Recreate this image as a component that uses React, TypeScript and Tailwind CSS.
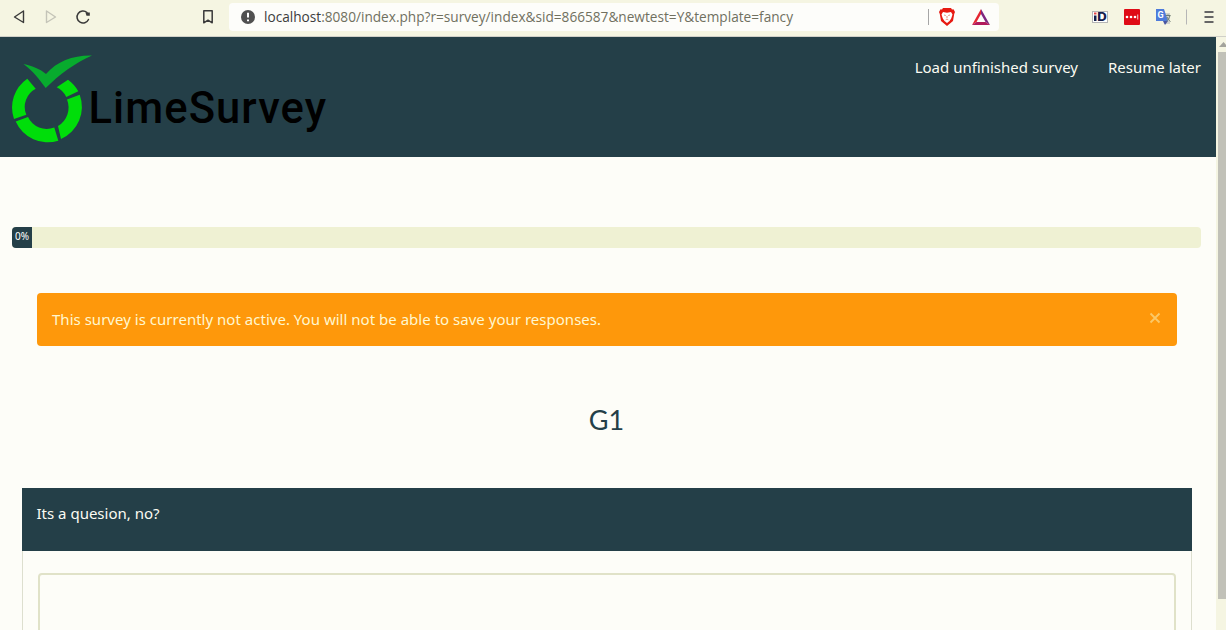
import React from "react";

function LimeLogo() {
  return (
    <svg className="block" width="320" height="100" viewBox="0 0 320 100" aria-label="LimeSurvey">
      <g transform="translate(-10 -50)">
        <path d="M23.500 64C33 66 40 69 46 74C57 61 74 55 92 55.500C75 63 60 74 45.700 88C39 79 33 71 23.500 64Z" fill="#08ab2e" />
        <g fill="#00de0a">
          <path d="M27.300 78.700A35 35 0 0 0 14 119L26.300 114.700A20.500 20.500 0 0 1 35.700 88.700Z" />
          <path d="M15.700 121.500A35 35 0 0 0 58.300 140.700L54.300 127.500A20.500 20.500 0 0 1 28 117Z" />
          <path d="M61 139A35 35 0 0 0 79.700 94.700L67 99.500A21.500 21.500 0 0 1 58 126Z" />
          <path d="M56.700 87.300L68 79.700A35 35 0 0 1 78.300 91.300L66.300 97A21 21 0 0 0 56.700 87.300Z" />
        </g>
        <text x="88.500" y="122.500" fill="#000" fontFamily="Roboto, sans-serif" fontWeight="500" fontSize="43.500" textLength="237.500">LimeSurvey</text>
      </g>
    </svg>
  );
}

function Toolbar() {
  return (
    <div className="flex h-[37px] shrink-0 items-start border-b border-[#d0d0c8] bg-[#f5f5e2] font-['Open_Sans',sans-serif]">
      <svg className="h-[34px] w-[229px] shrink-0" viewBox="0 0 229 34" fill="none" strokeLinejoin="round" strokeLinecap="round">
        <path d="M23.500 11v11.500L14.500 17z" stroke="#3a3a3a" strokeWidth="1.400" />
        <path d="M46.500 11v11.500L55.500 17z" stroke="#c4c4b8" strokeWidth="1.400" />
        <path d="M88.500 19.500a6 6 0 1 1-1.500-7" stroke="#3a3a3a" strokeWidth="1.500" />
        <path d="M85.500 12.500h4.300v3.300h-3.300z" fill="#3a3a3a" />
        <path d="M203.800 10.800h8.400v12L208 20.200l-4.200 2.600z" stroke="#3a3a3a" strokeWidth="1.500" />
      </svg>
      <div className="mt-[3px] flex h-7 w-[770px] shrink-0 items-center rounded bg-[#fdfdfa]">
        <svg className="ml-3 size-[14px] shrink-0" viewBox="0 0 14 14">
          <circle cx="7" cy="7" r="7" fill="#505050" />
          <path d="M7 2.800v4.800M7 9.500v1.800" stroke="#fff" strokeWidth="2" />
        </svg>
        <svg className="ml-[9px] h-7 w-[664px] shrink-0" viewBox="0 0 664 28">
          <text x="0" y="19" fontSize="14" textLength="529" lengthAdjust="spacingAndGlyphs" fill="#70705f">
            <tspan fill="#3c3c3c">localhost</tspan>:8080/index.php?r=survey/index&amp;sid=866587&amp;newtest=Y&amp;template=fancy
          </text>
        </svg>
        <div className="h-4 w-px bg-[#a6a6a6]" />
        <svg className="ml-[10px] h-[18px] w-4" viewBox="0 0 16 18">
          <path d="M4 0h8l1 1.500 1.500-.2L16 4l-.8 2L14 13l-6 5-6-5L.8 6 0 4l1.500-2.700 1.500.2z" fill="#e71a12" />
          <path d="M4 4l4 .7L12 4l1.500 2.500-1.300 4-1.700 2.500L8 15l-2.500-2-1.700-2.500-1.300-4z" fill="#fff" />
          <path d="M5 7l1.800.5M11 7l-1.800.5M8 8v2M6.700 11.800L8 11l1.300.8" stroke="#e88070" strokeWidth="0.900" fill="none" />
        </svg>
        <svg className="ml-[17px] h-4 w-[18px]" viewBox="0 0 18 16">
          <path d="M9 0L0 16l4.500-3L9 5z" fill="#e52631" />
          <path d="M9 0l9 16-4.500-3L9 5z" fill="#7e2680" />
          <path d="M0 16h18l-4.500-3h-9z" fill="#b11a5c" />
        </svg>
      </div>
      <svg className="h-[34px] w-[227px] shrink-0" viewBox="0 0 227 34">
        <rect x="93.500" y="11.500" width="15" height="11" fill="#fff" stroke="#b5b5b5" />
        <path d="M95 15.500h2.500V21H95z" fill="#15204c" />
        <rect x="95" y="12.500" width="2.500" height="2" fill="#e34646" />
        <text x="98.300" y="21" fontFamily="Inter, sans-serif" fontSize="11.500" fontWeight="800" fill="#15204c" textLength="9.500" lengthAdjust="spacingAndGlyphs">D</text>
        <rect x="125" y="9" width="16" height="16" rx="1" fill="#df0b16" />
        <g fill="#fff"><circle cx="128" cy="17" r="1.300" /><circle cx="132" cy="17" r="1.300" /><circle cx="136" cy="17" r="1.300" /><path d="M138.400 14.500h.8v5h-.8z" /></g>
        <path d="M163 13h8v11h-6z" fill="#d0d2cc" />
        <path d="M157 9h8l4 12h-12z" fill="#4e7bdb" />
        <path d="M164 21h5l-3 4z" fill="#4855a2" />
        <text x="158.500" y="18.300" fontFamily="Roboto, sans-serif" fontSize="9" fontWeight="700" fill="#fff">G</text>
        <path d="M166.500 15.500h5M169 14.500v1M171 15.500c-.8 3-2 4.500-3.500 5.500M168 17c.8 2 2 3.500 3.500 4.500" stroke="#6e7d75" fill="none" />
        <path d="M187.500 9.500v15" stroke="#b6b6b6" />
        <path d="M205.500 12h9M205.500 17h9M205.500 22h9" stroke="#666" strokeWidth="2" />
      </svg>
    </div>
  );
}

export default function App() {
  return (
    <div className="flex h-[630px] w-[1226px] flex-col overflow-hidden bg-[#fdfdf8] font-['Noto_Sans',sans-serif] text-[15px]">
      <Toolbar />
      <div className="flex min-h-0 flex-1">
        <main className="w-[1216px] shrink-0 overflow-hidden">
          <header className="flex h-[120px] justify-between bg-[#243f48] pl-[10px] pr-[15px] text-[#fbfbf2]">
            <div className="mt-[13px]"><LimeLogo /></div>
            <nav className="mt-[19px] flex h-[22px] items-center gap-[30px] whitespace-nowrap">
              <a>Load unfinished survey</a>
              <a>Resume later</a>
            </nav>
          </header>
          <div className="ml-3 mt-[70px] h-[21px] w-[1189px] overflow-hidden rounded bg-[#eff1d3]">
            <div className="flex h-full w-5 items-center justify-center bg-[#243f48] pb-[3px] text-[10px] text-white">0%</div>
          </div>
          <div className="ml-[37px] mt-[45px] flex h-[53px] w-[1140px] items-center justify-between rounded bg-[#fe980b] pl-[15px] pr-4 text-[#fff7cf]">
            <span className="tracking-[0.018px]">This survey is currently not active. You will not be able to save your responses.</span>
            <svg className="mb-1 size-3" viewBox="0 0 12 12"><path d="M1.500 1.500l9 9M10.500 1.500l-9 9" stroke="#fbc868" strokeWidth="1.800" /></svg>
          </div>
          <h1 className="mt-[56px] h-9 pr-[3px] text-center font-['Lato',sans-serif] text-[27px] leading-9 text-[#243f48]">G1</h1>
          <section className="ml-[22px] mt-[50px] h-[180px] w-[1170px] border-x border-[#dddfcf]">
            <div className="-mx-px h-[63px] bg-[#243f48] px-[14.5px] pt-[14px] leading-[22px] text-[#fbfbf2]">Its a quesion, no?</div>
            <div className="ml-[15px] mt-[22px] h-[120px] w-[1138px] rounded border-2 border-[#e0e2c8]" />
          </section>
        </main>
        <div className="flex w-[10px] shrink-0 flex-col items-end bg-[#f5f5e2]">
          <svg className="h-[15px] w-2 shrink-0" viewBox="0 0 8 15"><path d="M1 10l4.500-5L10 10z" fill="#a3a39c" /></svg>
          <div className="h-[547px] w-2 bg-[#c1c1b8]" />
        </div>
      </div>
    </div>
  );
}
